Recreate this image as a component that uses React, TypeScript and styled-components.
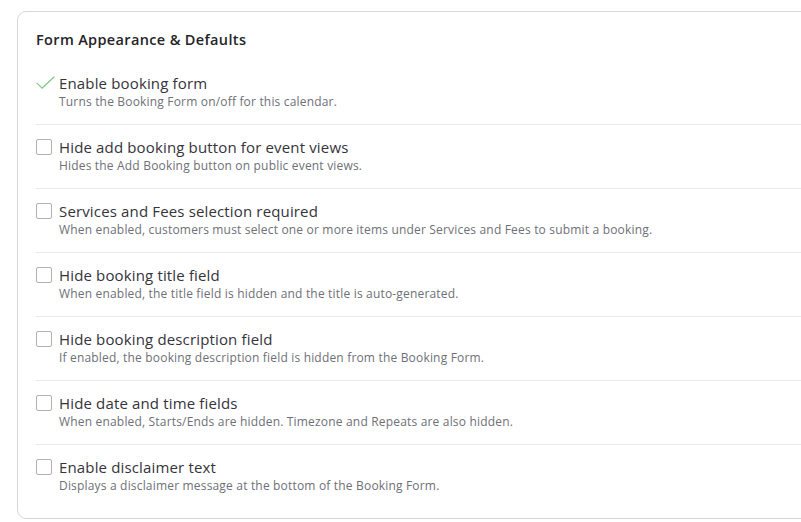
import styled, { createGlobalStyle } from "styled-components";

const GlobalStyle = createGlobalStyle`
    body {
        margin: 0;
        background: #ffffff;
        font-family: "Open Sans", "Liberation Sans", sans-serif;
        overflow: hidden;
    }
`;

type Option = {
    label: string;
    description: string;
    checked?: boolean;
};

const options: Option[] = [
    {
        label: "Enable booking form",
        description: "Turns the Booking Form on/off for this calendar.",
        checked: true,
    },
    {
        label: "Hide add booking button for event views",
        description: "Hides the Add Booking button on public event views.",
    },
    {
        label: "Services and Fees selection required",
        description:
            "When enabled, customers must select one or more items under Services and Fees to submit a booking.",
    },
    {
        label: "Hide booking title field",
        description: "When enabled, the title field is hidden and the title is auto-generated.",
    },
    {
        label: "Hide booking description field",
        description: "If enabled, the booking description field is hidden from the Booking Form.",
    },
    {
        label: "Hide date and time fields",
        description: "When enabled, Starts/Ends are hidden. Timezone and Repeats are also hidden.",
    },
    {
        label: "Enable disclaimer text",
        description: "Displays a disclaimer message at the bottom of the Booking Form.",
    },
];

const CheckIcon = () => (
    <svg width="19" height="14" viewBox="0 0 19 14" fill="none">
        <path d="M1 7.2 L6 12.2 L18 1" stroke="#82c782" strokeWidth="1.2" strokeLinecap="round" strokeLinejoin="round" />
    </svg>
);

const App = () => {
    return (
        <>
            <GlobalStyle />
            <Card>
                <Title>Form Appearance &amp; Defaults</Title>
                <List>
                    {options.map((opt) => (
                        <Row key={opt.label}>
                            <Control>{opt.checked ? <CheckIcon /> : <Box />}</Control>
                            <Label>{opt.label}</Label>
                            <Description>{opt.description}</Description>
                        </Row>
                    ))}
                </List>
            </Card>
        </>
    );
};

const Card = styled.section`
    margin: 11px 0 0 17px;
    width: 820px;
    box-sizing: border-box;
    border: 1px solid #d7d7db;
    border-radius: 9px;
    padding: 18px 0 10px 18px;
`;

const Title = styled.h2`
    margin: 0 0 11px;
    font-size: 14.5px;
    line-height: 20px;
    font-weight: 600;
    letter-spacing: 0.35px;
    color: #242428;
`;

const List = styled.div`
    display: flex;
    flex-direction: column;
`;

const Row = styled.div`
    display: grid;
    grid-template-columns: 23px 1fr;
    align-items: center;
    padding: 12px 0 14px;
    & + & {
        border-top: 1px solid #e9eaed;
    }
`;

const Control = styled.div`
    grid-row: 1;
    display: flex;
    align-items: center;
    height: 20px;
`;

const Box = styled.span`
    display: block;
    width: 14px;
    height: 14px;
    border: 1px solid #b0b0b5;
    border-radius: 2px;
`;

const Label = styled.div`
    grid-row: 1;
    grid-column: 2;
    font-size: 15px;
    line-height: 20px;
    letter-spacing: 0.15px;
    color: #34343a;
`;

const Description = styled.div`
    grid-row: 2;
    grid-column: 2;
    font-size: 12px;
    line-height: 17px;
    letter-spacing: 0.18px;
    color: #6e7077;
`;

export default App;
